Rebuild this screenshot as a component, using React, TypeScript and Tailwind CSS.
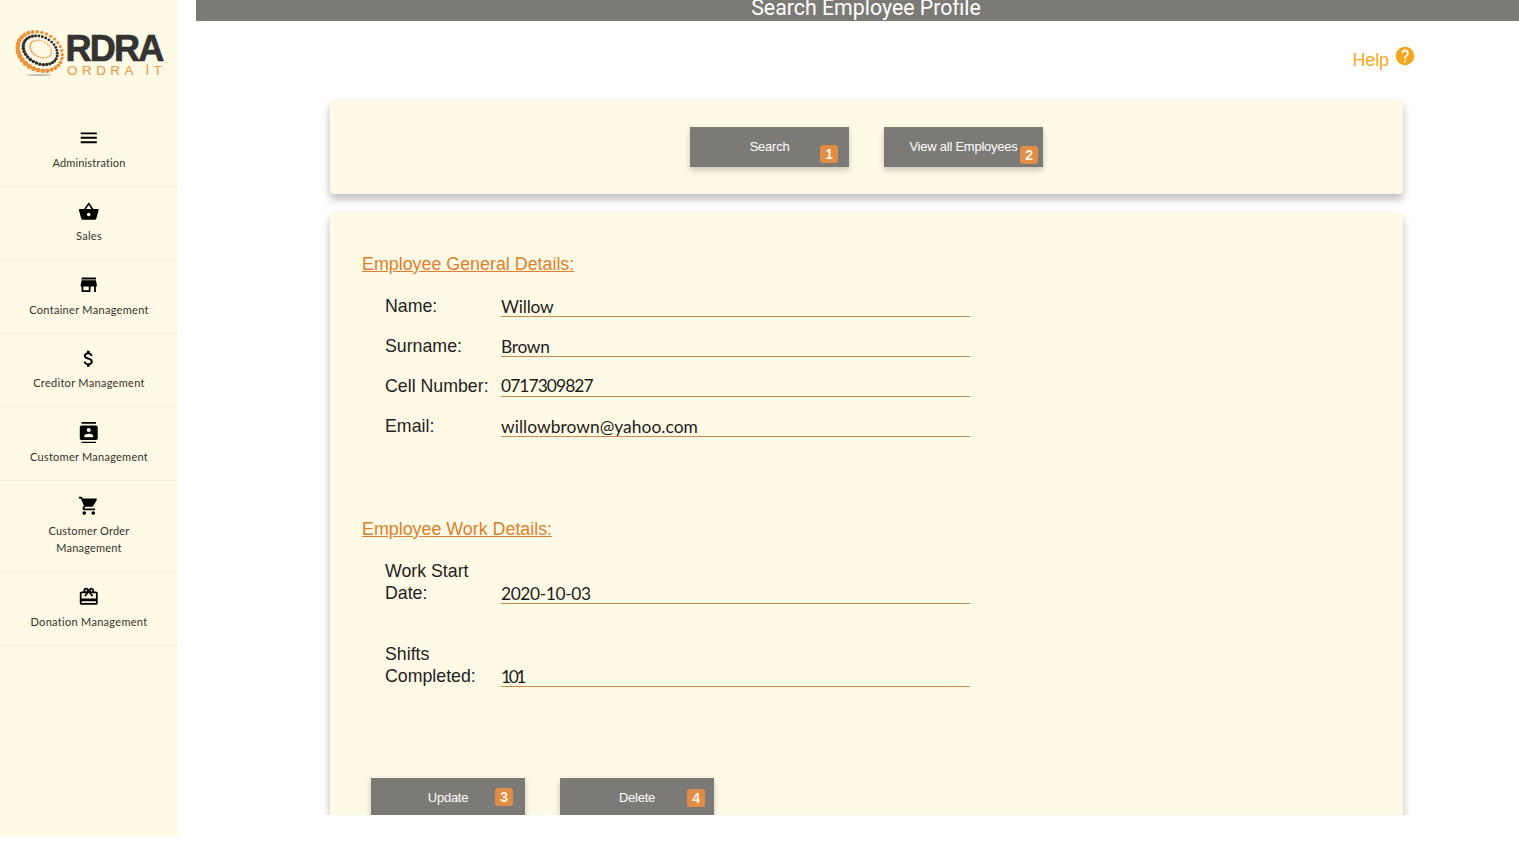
import type { ReactNode } from "react";
import {
  MdAttachMoney,
  MdCardGiftcard,
  MdContacts,
  MdHelp,
  MdMenu,
  MdShoppingBasket,
  MdShoppingCart,
  MdStore,
} from "react-icons/md";

const menu = [
  { icon: MdMenu, label: "Administration", spacing: "tracking-[0.15px]" },
  { icon: MdShoppingBasket, label: "Sales", spacing: "tracking-[0.3px]" },
  { icon: MdStore, label: "Container Management", spacing: "tracking-[0.3px]" },
  { icon: MdAttachMoney, label: "Creditor Management", spacing: "tracking-[0.3px]" },
  { icon: MdContacts, label: "Customer Management", spacing: "tracking-[0.25px]" },
  { icon: MdShoppingCart, label: "Customer Order Management", spacing: "tracking-[0.2px]" },
  { icon: MdCardGiftcard, label: "Donation Management", spacing: "tracking-[0.3px]" },
];

type RingProps = { cx: number; cy: number; rx: number; ry: number; count: number; size: number; grow: number; fill: string };

function BeadRing({ cx, cy, rx, ry, count, size, grow, fill }: RingProps) {
  const tilt = (28 * Math.PI) / 180;
  return (
    <g fill={fill}>
      {Array.from({ length: count }, (_, i) => {
        const a = (i / count) * Math.PI * 2;
        const x = rx * Math.cos(a);
        const y = ry * Math.sin(a);
        return (
          <circle
            key={i}
            cx={cx + x * Math.cos(tilt) - y * Math.sin(tilt)}
            cy={cy + x * Math.sin(tilt) + y * Math.cos(tilt)}
            r={size + grow * Math.sin(a - 0.5)}
          />
        );
      })}
    </g>
  );
}

function Logo() {
  return (
    <svg width="150" height="50" viewBox="14 28 150 50" role="img" aria-label="Ordra IT">
      <ellipse cx="39" cy="75" rx="13" ry="0.9" fill="#a9a797" opacity="0.7" />
      <BeadRing cx={40} cy={51.3} rx={23.3} ry={18.4} count={30} size={2.1} grow={0.5} fill="#ea943c" />
      <BeadRing cx={40.3} cy={50.2} rx={18} ry={13.3} count={31} size={1.6} grow={0.2} fill="#2e2e2c" />
      <BeadRing cx={40.8} cy={49} rx={11.4} ry={8} count={40} size={0.75} grow={0.1} fill="#eda04f" />
      <text x="65.5" y="60.8" textLength="97" lengthAdjust="spacingAndGlyphs" fontSize="36" fontWeight="700" letterSpacing="-1.8" fill="#333331" stroke="#333331" strokeWidth="0.7" className="font-['Liberation_Sans',Arial,sans-serif]">RDRA</text>
      <text x="67" y="74.8" textLength="95" fontSize="13.4" fill="#e8a04f" stroke="#e8a04f" strokeWidth="0.2" className="font-['Liberation_Sans',Arial,sans-serif]">ORDRA İT</text>
    </svg>
  );
}

function Badge({ children, className }: { children: ReactNode; className: string }) {
  return (
    <span className={`absolute flex size-[18px] items-center justify-center rounded-[3px] bg-[#e18d45] text-[14px] leading-none font-bold text-[#fff3e2] ${className}`}>
      {children}
    </span>
  );
}

function Button({ label, badge, className, badgeClass }: { label: string; badge: string; className: string; badgeClass: string }) {
  return (
    <button className={`relative flex justify-center bg-[#7c7a76] text-[13px] tracking-[-0.24px] text-white shadow-[0_3px_6px_rgba(0,0,0,0.22)] ${className}`}>
      <span>{label}</span>
      <Badge className={badgeClass}>{badge}</Badge>
    </button>
  );
}

function Field({ label, value, className, spacing }: { label: string; value: string; className: string; spacing: string }) {
  return (
    <div className={`flex h-[23px] items-end ${className}`}>
      <label className="w-[116px] pr-[11px] text-[17.75px] leading-[22px] text-[#222]">{label}</label>
      <div className={`h-[23px] w-[469px] border-b border-[#cf8c48] font-['Lato',sans-serif] text-[17.4px] text-[#1c1c1a] ${spacing}`}>
        {value}
      </div>
    </div>
  );
}

export default function App() {
  return (
    <div className="flex h-[855px] w-[1519px] overflow-hidden bg-white font-['Liberation_Sans',Arial,sans-serif]">
      <aside className="h-[836px] w-[178px] shrink-0 bg-[#fffae6]">
        <div className="h-[113px] pt-[28px] pl-[14px]"><Logo /></div>
        <nav>
          {menu.map(({ icon: Icon, label, spacing }) => (
            <a key={label} className="flex flex-col items-center border-b border-[#faeedd] px-5 pt-[14.2px] pb-[14.3px] text-center">
              <Icon className="mb-[5px] size-[21.5px] text-black" />
              <span className={`font-['Lato',sans-serif] text-[11px] leading-[17.6px] text-[#33322d] ${spacing}`}>{label}</span>
            </a>
          ))}
        </nav>
      </aside>
      <main className="ml-[18px] flex h-[815px] grow flex-col overflow-hidden">
        <header className="flex h-[20.5px] shrink-0 items-end justify-center bg-[#7c7a76] pl-[17px] font-['Roboto',sans-serif] text-[21.33px] leading-[27px] text-white">
          <h1>Search Employee Profile</h1>
        </header>
        <div className="flex h-[79.5px] shrink-0 justify-end gap-[5px] pt-[25px] pr-[103px] text-[#f5a61c]">
          <span className="pt-[2.5px] text-[18px] leading-[24px] tracking-[-0.1px]">Help</span>
          <MdHelp className="-mt-px size-[22px]" />
        </div>
        <section className="ml-[134px] flex h-[94px] w-[1073px] shrink-0 justify-center gap-[35px] rounded-[4px] bg-[#fffae6] pt-[27px] shadow-[0_6px_8px_rgba(0,0,0,0.2),0_3px_10px_rgba(0,0,0,0.08)]">
          <Button label="Search" badge="1" className="h-[40px] w-[159px] pt-[10px]" badgeClass="top-[18px] left-[130px]" />
          <Button label="View all Employees" badge="2" className="h-[40px] w-[159px] pt-[10px]" badgeClass="top-[18.5px] left-[136px]" />
        </section>
        <section className="mt-[19px] ml-[134px] h-[640px] w-[1073px] shrink-0 rounded-[4px] bg-[#fffae6] pl-8 shadow-[0_6px_8px_rgba(0,0,0,0.2),0_3px_10px_rgba(0,0,0,0.08)]">
          <h2 className="pt-[39px] text-[17.85px] leading-[24px] text-[#dc7f2f] underline">Employee General Details:</h2>
          <div className="pl-[23px]">
            <Field label="Name:" value="Willow" className="mt-[18px]" spacing="leading-[25px] tracking-[-0.2px]" />
            <Field label="Surname:" value="Brown" className="mt-[17px]" spacing="leading-[25px] tracking-[-0.3px]" />
            <Field label="Cell Number:" value="0717309827" className="mt-[17px]" spacing="leading-[24px] tracking-[-0.92px]" />
            <Field label="Email:" value="willowbrown@yahoo.com" className="mt-[17px]" spacing="leading-[25px] tracking-[0.04px]" />
          </div>
          <h2 className="mt-[80px] text-[17.85px] leading-[24px] text-[#dc7f2f] underline">Employee Work Details:</h2>
          <div className="pl-[23px]">
            <Field label="Work Start Date:" value="2020-10-03" className="mt-[40px]" spacing="leading-[25px] tracking-[-0.4px]" />
            <Field label="Shifts Completed:" value="101" className="mt-[60px]" spacing="leading-[25px] tracking-[-2.4px]" />
          </div>
          <div className="mt-[91px] ml-[9px] flex gap-[35px]">
            <Button label="Update" badge="3" className="h-[40px] w-[154px] pt-[10px]" badgeClass="top-[10px] left-[124px]" />
            <Button label="Delete" badge="4" className="h-[40px] w-[154px] pt-[10px]" badgeClass="top-[11px] left-[127px]" />
          </div>
        </section>
      </main>
    </div>
  );
}
